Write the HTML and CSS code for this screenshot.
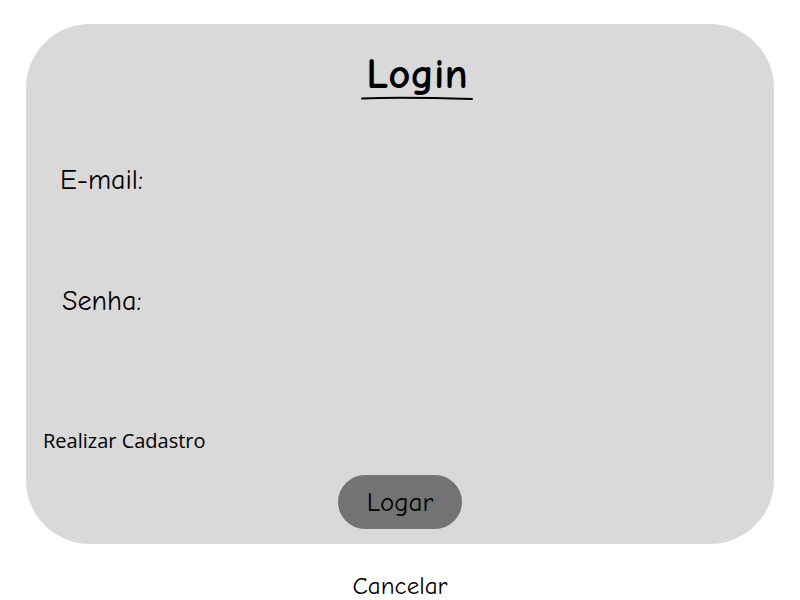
FILE: index.html
```html
<!DOCTYPE html>
<html lang="pt">
<head>
<meta charset="utf-8">
<title>Login</title>
<link rel="stylesheet" href="styles.css">
</head>
<body>
<main class="card">
  <header class="title-wrap">
    <h1 class="title">Login</h1>
    <svg class="underline" width="112" height="6" viewBox="0 0 112 6"><path d="M1 3.5 Q 40 2 111 4" stroke="#000" stroke-width="2" fill="none" stroke-linecap="round"/></svg>
  </header>
  <div class="field field-email">E-mail:</div>
  <div class="field field-pass">Senha:</div>
  <a class="register">Realizar Cadastro</a>
  <div class="actions"><button class="btn">Logar</button></div>
</main>
<div class="cancel">Cancelar</div>
</body>
</html>
```
FILE: styles.css
```css
html, body {
  margin: 0;
  padding: 0;
  background: #fff;
}
body {
  font-family: "Comic Sans MS", "Comic Neue", cursive;
  color: #000;
}
.card {
  margin: 24px 26px 0;
  height: 520px;
  box-sizing: border-box;
  background: #d9d9d9;
  border-radius: 64px;
  display: flex;
  flex-direction: column;
}
.title-wrap {
  display: flex;
  flex-direction: column;
  align-items: center;
  padding-top: 25px;
  margin-left: 34px;
}
.title {
  margin: 0;
  font-size: 43px;
  font-weight: bold;
  line-height: 50px;
}
.underline {
  display: block;
  margin-top: -4px;
}
.field {
  font-size: 28px;
  line-height: 34px;
}
.field-email {
  margin: 62px 0 0 34px;
}
.field-pass {
  margin: 87px 0 0 36px;
}
.register {
  font-family: "Open Sans", sans-serif;
  font-size: 20px;
  line-height: 28px;
  margin: 109px 0 0 17px;
}
.actions {
  display: flex;
  justify-content: center;
  margin-top: 20px;
}
.btn {
  font-family: inherit;
  font-size: 27px;
  color: #000;
  background: #737373;
  border: none;
  border-radius: 27px;
  width: 124px;
  height: 54px;
  padding: 0;
}
.cancel {
  text-align: center;
  font-size: 25px;
  line-height: 32px;
  margin-top: 26px;
}
```
